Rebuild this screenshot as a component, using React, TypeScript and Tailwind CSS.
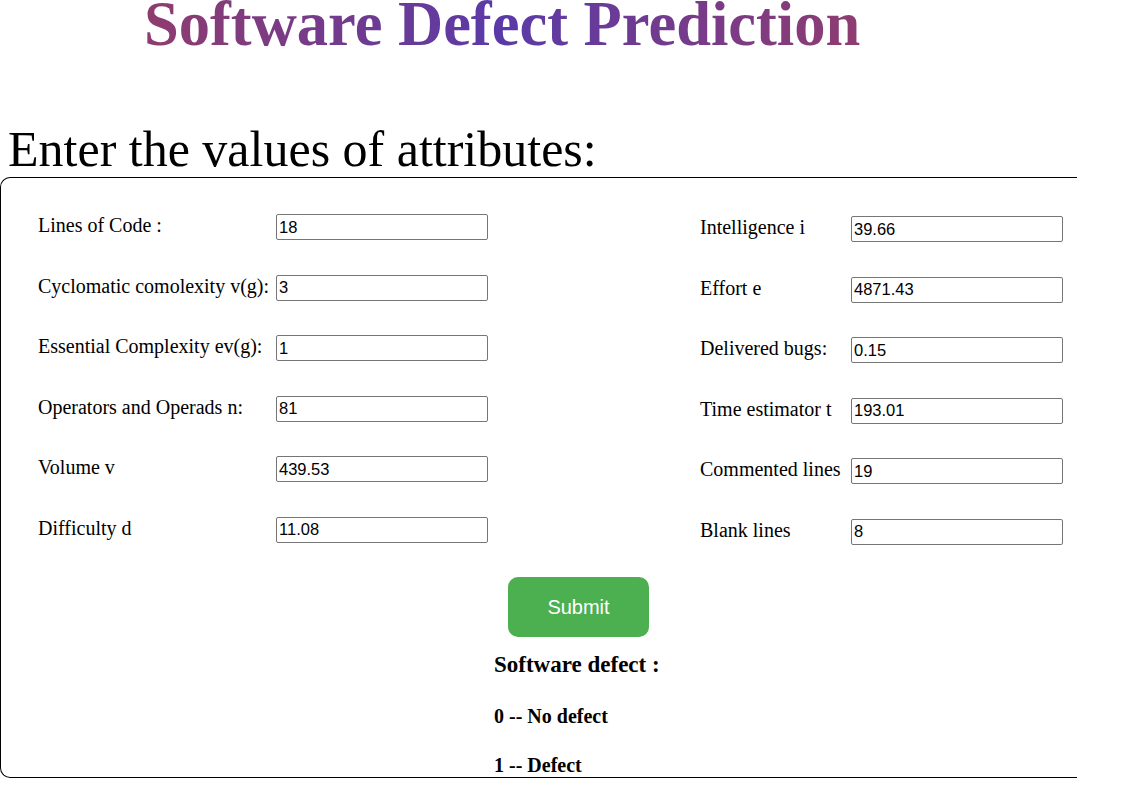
import React from "react";

const left = [
  { label: "Lines of Code :", value: "18" },
  { label: "Cyclomatic comolexity v(g):", value: "3" },
  { label: "Essential Complexity ev(g):", value: "1" },
  { label: "Operators and Operads n:", value: "81" },
  { label: "Volume v", value: "439.53" },
  { label: "Difficulty d", value: "11.08" },
];

const right = [
  { label: "Intelligence i", value: "39.66" },
  { label: "Effort e", value: "4871.43" },
  { label: "Delivered bugs:", value: "0.15" },
  { label: "Time estimator t", value: "193.01" },
  { label: "Commented lines", value: "19" },
  { label: "Blank lines", value: "8" },
];

function Field({ label, value, labelWidth }: { label: string; value: string; labelWidth: string }) {
  return (
    <div className="flex items-start h-[60.6px]">
      <span className={`${labelWidth} shrink-0 whitespace-nowrap text-[20px] leading-[23px] text-black`}>{label}</span>
      <input
        defaultValue={value}
        className="w-[212px] h-[26px] border border-[#767676] rounded-[2px] px-[2px] bg-white text-[16.5px] text-black font-['Liberation_Sans',Arial,sans-serif] outline-none"
      />
    </div>
  );
}

export default function App() {
  return (
    <div className="min-h-screen bg-white font-['Liberation_Serif','Times_New_Roman',serif] text-black">
      <h1 className="pl-[144px] text-[62.5px] leading-[48px] font-bold whitespace-nowrap">
        <span className="bg-[linear-gradient(to_right,#8f3c6e,#5a3aa8_50%,#8f3c70)] bg-clip-text text-transparent">
          Software Defect Prediction
        </span>
      </h1>

      <h2 className="mt-[73px] pl-[8px] text-[50px] leading-[56px] font-normal whitespace-nowrap">
        Enter the values of attributes:
      </h2>

      <div className="w-[1077px] border-l border-t border-b border-black rounded-l-[10px] pt-[36px]">
        <div className="flex pl-[37px]">
          <div className="w-[662px] flex flex-col">
            {left.map((f) => (
              <Field key={f.label} {...f} labelWidth="w-[238px]" />
            ))}
          </div>
          <div className="flex flex-col pt-[2px]">
            {right.map((f) => (
              <Field key={f.label} {...f} labelWidth="w-[151px]" />
            ))}
          </div>
        </div>

        <div className="ml-[493px] flex flex-col items-start">
          <button className="ml-[14px] mt-[-3px] w-[141px] h-[60px] rounded-[10px] bg-[#4caf50] text-white text-[20px] font-['Liberation_Sans',Arial,sans-serif]">
            Submit
          </button>
          <h3 className="mt-[15px] text-[23px] leading-[25px] font-bold">Software defect :</h3>
          <h4 className="mt-[28px] text-[20px] leading-[23px] font-bold">0 -- No defect</h4>
          <h4 className="mt-[26px] text-[20px] leading-[23px] font-bold">1 -- Defect</h4>
        </div>
      </div>
    </div>
  );
}
